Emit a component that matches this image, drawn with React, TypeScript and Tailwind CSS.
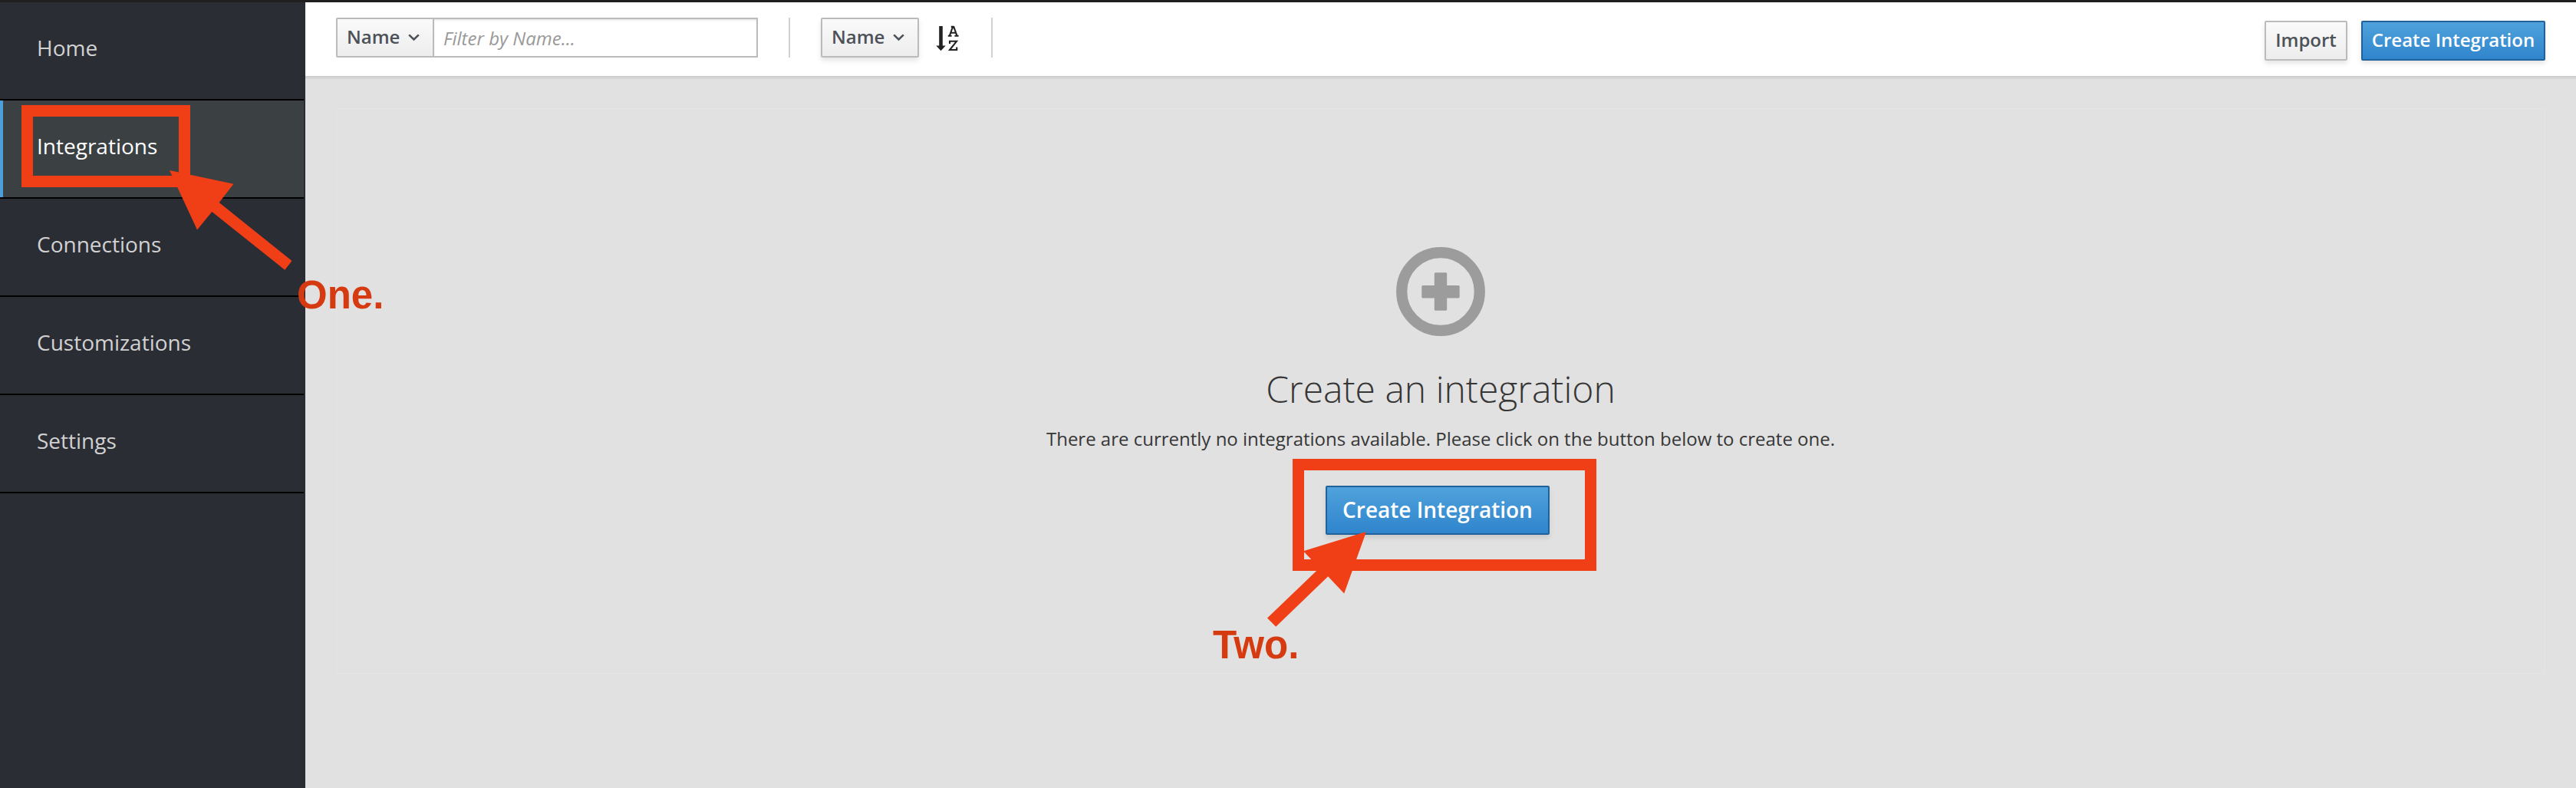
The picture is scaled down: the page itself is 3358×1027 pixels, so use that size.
const navItems = ["Home", "Integrations", "Connections", "Customizations", "Settings"];

const grayButton =
  "flex h-[52px] items-center border-2 border-[#bbb] bg-linear-to-b from-[#fafafa] to-[#ededed] text-2xl leading-none font-semibold text-[#4d5258]";
const blueButton =
  "flex items-center justify-center rounded-[2px] border-2 border-[#21629b] bg-linear-to-b from-[#4fa2db] to-[#2f85cd] leading-none font-semibold whitespace-nowrap text-white shadow-[0_4px_6px_rgba(3,3,3,0.1)]";

function Chevron() {
  return (
    <svg className="h-[10px] w-[15px]" viewBox="0 0 15 10" fill="none" stroke="currentColor" strokeWidth="2.6">
      <path d="M1.2 1.4 7.5 7.4 13.8 1.4" />
    </svg>
  );
}

function SortIcon() {
  return (
    <svg className="h-[34px] w-[30px]" viewBox="0 0 30 34" fill="none" stroke="#222" strokeWidth="2.4">
      <path d="M6.5 1V28" strokeWidth="4.6" />
      <path d="M0.3 26.5H12.7L6.5 33.2Z" fill="#222" stroke="none" />
      <path d="M18 13.2 22 2H23.3L27.3 13.2M19.5 9.8H26M15.8 13.8H20.6M24.4 13.8H29.6M19.8 1.9H23.5" strokeWidth="2.1" />
      <path d="M18 24V20.8H27L18 32H27.2V28.6" strokeWidth="2.1" />
    </svg>
  );
}

export default function App() {
  return (
    <div className="relative flex h-[1027px] w-[3358px] flex-col overflow-hidden border-t-3 border-[#1f1f1f] bg-[#e1e1e1] font-['Open_Sans',sans-serif]">
      <div className="flex flex-1">
        <nav className="w-[398px] border-r-2 border-[#292c34] bg-[#2b2d35]">
          {navItems.map((item) => (
            <a
              key={item}
              className={
                item === "Integrations"
                  ? "flex h-32 items-center border-b-2 border-black bg-[#3b4043] pb-2 pl-[48px] text-[28px] text-white shadow-[inset_4px_0_0_#4c9fda]"
                  : "flex h-32 items-center border-b-2 border-black pb-2 pl-[48px] text-[28px] text-[#d1d1d1]"
              }
            >
              {item}
            </a>
          ))}
        </nav>
        <main className="flex flex-1 flex-col">
          <header className="flex h-[98px] items-start justify-between border-b-2 border-[#cfcfcf] bg-white pr-10 pl-10">
            <div className="flex pt-5">
              <button className={`${grayButton} w-[128px] justify-between rounded-l-[2px] pr-[17px] pl-[12px]`}>
                <span className="pb-[2px]">Name</span>
                <Chevron />
              </button>
              <div className="-ml-[2px] flex h-[52px] w-[424px] items-center border-2 border-[#bbb] bg-white pt-[2px] pl-[12px] text-2xl leading-none text-[#999] italic shadow-[inset_0_2px_2px_rgba(3,3,3,0.075)]">
                Filter by Name...
              </div>
              <div className="ml-10 h-[52px] w-[2px] bg-[#d1d1d1]" />
              <button className={`${grayButton} ml-10 w-[128px] justify-between rounded-[2px] pr-[17px] pl-[12px] shadow-[0_4px_6px_rgba(3,3,3,0.1)]`}>
                <span className="pb-[2px]">Name</span>
                <Chevron />
              </button>
              <div className="mt-[10px] ml-[22px]">
                <SortIcon />
              </div>
              <div className="ml-[42px] h-[52px] w-[2px] bg-[#d1d1d1]" />
            </div>
            <div className="flex gap-[18px] pt-6">
              <button className={`${grayButton} w-[108px] justify-center rounded-[2px] pb-[2px] shadow-[0_4px_6px_rgba(3,3,3,0.1)]`}>
                Import
              </button>
              <button className={`${blueButton} h-[52px] w-[240px] pb-[2px] text-2xl`}>Create Integration</button>
            </div>
          </header>
          <div className="h-[2px] bg-[#d6d6d6]" />
          <section className="mx-10 mt-[38px] flex h-[738px] flex-col items-center rounded-[2px] border-2 border-[#e3e3e3] pt-[179px] text-[#363636]">
            <svg className="h-[116px] w-[116px]" viewBox="0 0 116 116">
              <circle cx="58" cy="58" r="50.8" fill="none" stroke="#9c9c9c" strokeWidth="14.2" />
              <rect x="33.3" y="50" width="49.4" height="16.4" rx="1.5" fill="#9c9c9c" />
              <rect x="49.8" y="33.3" width="16.4" height="49.4" rx="1.5" fill="#9c9c9c" />
            </svg>
            <h1 className="mt-[42px] text-5xl leading-[53px] font-light">Create an integration</h1>
            <p className="mt-[19px] text-2xl leading-10">
              There are currently no integrations available. Please click on the button below to create one.
            </p>
            <button className={`${blueButton} mt-[41px] mr-2 h-16 w-[292px] pb-[2px] text-[28px]`}>Create Integration</button>
          </section>
        </main>
      </div>

      {/* Tutorial annotations drawn above the page */}
      <div className="absolute top-[134px] left-[28px] h-[107px] w-[220px] border-15 border-[#f03e16]" />
      <div className="absolute top-[595px] left-[1685px] h-[146px] w-[396px] border-15 border-[#f03e16]" />
      <svg className="absolute top-[216px] left-[218px] h-[136px] w-[166px]" viewBox="218 219 166 136">
        <path
          d="M221 222 304.5 239.7 285.7 264 380.5 340 371.3 351.7 276.3 276 257 299.5Z"
          fill="#f03e16"
        />
      </svg>
      <svg className="absolute top-[687px] left-[1648px] h-[130px] w-[136px]" viewBox="1648 690 136 130">
        <path
          d="M1781 693 1752.2 773.5 1731.2 751.3 1663.2 816.7 1652 805.5 1720 740.3 1699 718.3Z"
          fill="#f03e16"
        />
      </svg>
      <span className="absolute top-[354px] left-[387px] font-['Liberation_Sans',Arial,sans-serif] text-[51px] leading-[56px] font-bold text-[#d53a11]">
        One.
      </span>
      <span className="absolute top-[810px] left-[1581px] font-['Liberation_Sans',Arial,sans-serif] text-[51px] leading-[56px] font-bold text-[#d53a11]">
        Two.
      </span>
    </div>
  );
}
